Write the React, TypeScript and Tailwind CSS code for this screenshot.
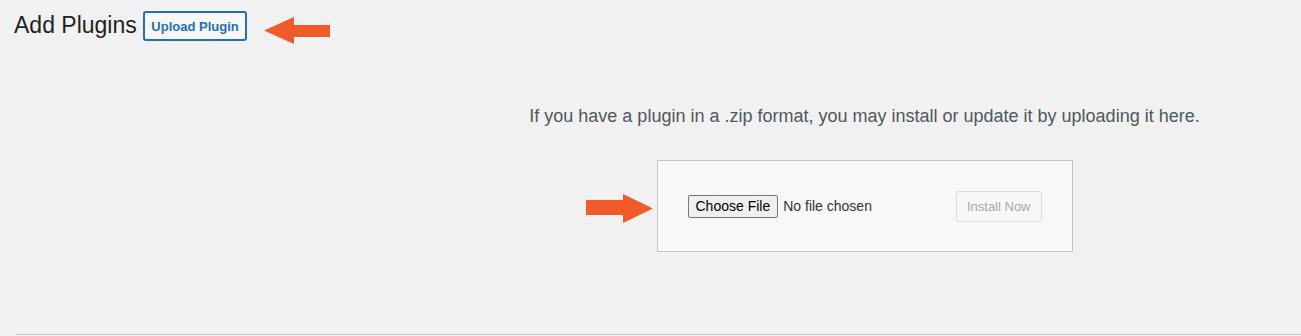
import React from "react";

export default function App() {
  return (
    <div className="w-[1301px] h-[336px] overflow-hidden bg-[#f1f1f1] font-['Liberation_Sans',Arial,sans-serif]">
      {/* Header row */}
      <div className="flex items-start pl-[14px] pt-[11px]">
        <h1 className="w-[129px] h-[30px] text-[23px] leading-[28px] font-normal text-[#1d2327] whitespace-nowrap">
          Add Plugins
        </h1>
        <button className="w-[104px] h-[30px] border-2 border-[#2271b1] rounded-[3px] bg-[#f6f7f7] text-[13px] font-semibold text-[#2271b1] leading-none flex items-center justify-center">
          Upload Plugin
        </button>
        <svg
          className="ml-[17px] mt-[6px]"
          width="66"
          height="28"
          viewBox="0 0 66 28"
        >
          <polygon
            points="0,13.5 30,0 30,8 66,8 66,20 30,20 30,27"
            fill="#f15a29"
          />
        </svg>
      </div>

      {/* Upload area */}
      <div className="pl-[428px] w-[1301px]">
        <div className="w-[873px] flex flex-col items-center">
          <p className="mt-[59px] text-[18px] leading-[25px] text-[#50575e] whitespace-nowrap">
            If you have a plugin in a .zip format, you may install or update it by uploading it here.
          </p>
          <div className="relative mt-[31px] w-[416px] h-[92px] border border-[#c3c4c7] bg-[#f8f8f8] px-[30px] flex items-center justify-between">
            <svg
              className="absolute right-full mr-[5px] top-[33px]"
              width="67"
              height="29"
              viewBox="0 0 67 29"
            >
              <polygon
                points="0,6 37,6 37,0 67,14.5 37,29 37,21 0,21"
                fill="#f15a29"
              />
            </svg>
            <div className="flex items-center">
              <span className="h-[23px] px-[7px] border border-[#767676] rounded-[2px] bg-[#efefef] text-[14px] leading-[21px] text-black">
                Choose File
              </span>
              <span className="ml-[5px] text-[14px] text-[#333333]">No file chosen</span>
            </div>
            <span className="h-[31px] px-[10px] border border-[#dcdcde] rounded-[3px] bg-[#f6f7f7] text-[13px] leading-[29px] text-[#a7aaad]">
              Install Now
            </span>
          </div>
        </div>
      </div>

      {/* Bottom separator */}
      <div className="mt-[82px] ml-[16px] h-[2px] border-t border-[#c8c8c8]" />
    </div>
  );
}
